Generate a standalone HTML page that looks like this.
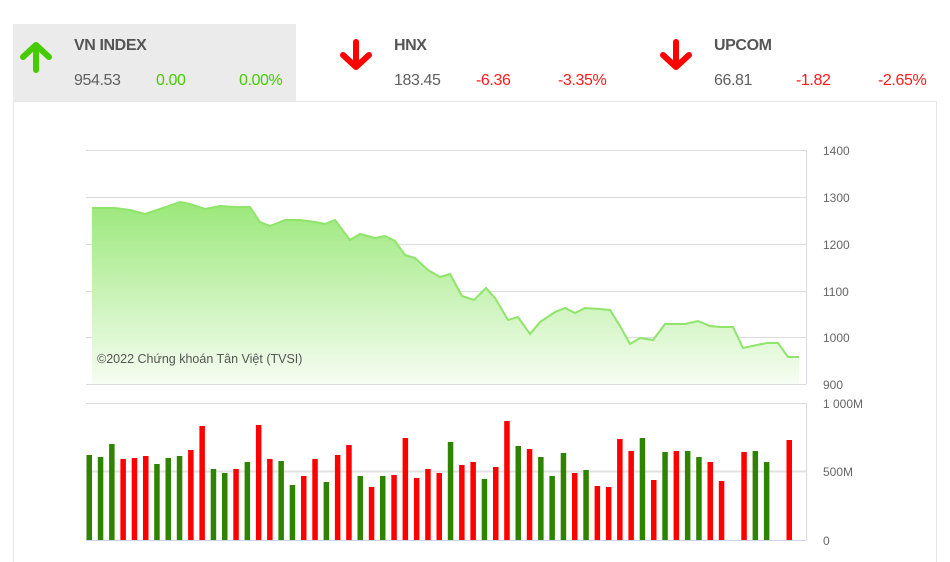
<!DOCTYPE html>
<html><head><meta charset="utf-8"><style>
body{margin:0;width:950px;height:552px;background:#fff;overflow:hidden;position:relative;font-family:"Liberation Sans",sans-serif}
.t{position:absolute;font-size:16px;color:#606060;white-space:nowrap;letter-spacing:-0.4px}
.b{font-weight:bold;color:#555;font-size:16px}
.g{color:#44cc00}.r{color:#ff1a1a}
</style></head><body>
<div style="position:absolute;left:13px;top:24px;width:283px;height:77px;background:#ebebeb"></div>
<div style="position:absolute;left:13px;top:101px;width:922px;height:460px;border-left:1px solid #e6e6e6;border-right:1px solid #e6e6e6;border-top:1px solid #e6e6e6"></div>

<svg style="position:absolute;left:0;top:0" width="950" height="110">
<g stroke-linecap="round" stroke-linejoin="round" fill="none">
<path d="M36 70 V46 M23 57 L36 45 L49 57" stroke="#44cc00" stroke-width="6"/>
<path d="M356 42 V66 M343 55 L356 67 L369 55" stroke="#ff0000" stroke-width="6"/>
<path d="M676 42 V66 M663 55 L676 67 L689 55" stroke="#ff0000" stroke-width="6"/>
</g></svg>

<div class="t b" style="left:74px;top:37px">VN INDEX</div>
<div class="t" style="left:74px;top:72px">954.53</div>
<div class="t g" style="left:156px;top:72px">0.00</div>
<div class="t g" style="left:239px;top:72px">0.00%</div>

<div class="t b" style="left:394px;top:37px">HNX</div>
<div class="t" style="left:394px;top:72px">183.45</div>
<div class="t r" style="left:476px;top:72px">-6.36</div>
<div class="t r" style="left:558px;top:72px">-3.35%</div>

<div class="t b" style="left:714px;top:37px">UPCOM</div>
<div class="t" style="left:714px;top:72px">66.81</div>
<div class="t r" style="left:796px;top:72px">-1.82</div>
<div class="t r" style="left:878px;top:72px">-2.65%</div>

<svg style="position:absolute;left:0;top:0" width="950" height="552">
<defs><linearGradient id="ag" x1="0" y1="0" x2="0" y2="1">
<stop offset="0" stop-color="#9be87a"/><stop offset="1" stop-color="#f6fdf2"/></linearGradient></defs>
<g stroke="#dcdcdc" stroke-width="1">
<line x1="86" y1="150.5" x2="806" y2="150.5"/>
<line x1="86" y1="197.5" x2="806" y2="197.5"/>
<line x1="86" y1="244.5" x2="806" y2="244.5"/>
<line x1="86" y1="291.5" x2="806" y2="291.5"/>
<line x1="86" y1="337.5" x2="806" y2="337.5"/>
<line x1="86" y1="384.5" x2="806" y2="384.5"/>
<line x1="806.5" y1="150" x2="806.5" y2="384" stroke="#d4dbe6"/>
<line x1="86" y1="403.5" x2="806" y2="403.5"/>
<line x1="86" y1="471.5" x2="806" y2="471.5" stroke="#e2e2e2" stroke-width="2"/>
<line x1="806.5" y1="403" x2="806.5" y2="540" stroke="#d4dbe6"/>
</g>
<path d="M92 208 L115 208 L130 210 L145 214 L160 209 L180 202 L190 204 L205 209 L220 206 L235 207 L250 207 L260 222 L270 226 L285 220 L300 220 L315 222 L325 224 L335 220 L350 240 L360 234 L375 238 L385 236 L395 241 L405 255 L415 258 L428 270 L440 277 L450 274 L462 296 L474 300 L486 288 L495 298 L508 320 L518 317 L530 334 L540 322 L555 312 L565 308 L575 313 L585 308 L600 309 L610 310 L620 326 L630 344 L640 338 L653 340 L665 324 L685 324 L698 321 L710 326 L720 327 L733 327 L743 348 L757 345 L767 343 L778 343 L788 357 L799 357 L799 384 L92 384 Z" fill="url(#ag)"/>
<path d="M92 208 L115 208 L130 210 L145 214 L160 209 L180 202 L190 204 L205 209 L220 206 L235 207 L250 207 L260 222 L270 226 L285 220 L300 220 L315 222 L325 224 L335 220 L350 240 L360 234 L375 238 L385 236 L395 241 L405 255 L415 258 L428 270 L440 277 L450 274 L462 296 L474 300 L486 288 L495 298 L508 320 L518 317 L530 334 L540 322 L555 312 L565 308 L575 313 L585 308 L600 309 L610 310 L620 326 L630 344 L640 338 L653 340 L665 324 L685 324 L698 321 L710 326 L720 327 L733 327 L743 348 L757 345 L767 343 L778 343 L788 357 L799 357" fill="none" stroke="#8ee56a" stroke-width="2"/>
<g font-size="12" fill="#666" font-family="Liberation Sans,sans-serif">
<text x="823" y="155">1400</text><text x="823" y="202">1300</text><text x="823" y="249">1200</text>
<text x="823" y="296">1100</text><text x="823" y="342">1000</text><text x="823" y="389">900</text>
<text x="823" y="408">1 000M</text><text x="823" y="476">500M</text><text x="823" y="545">0</text>
<text x="97" y="363" font-size="12.5" fill="#555">©2022 Chứng khoán Tân Việt (TVSI)</text>
</g>
<g id="bars"></g>
<line x1="86" y1="540.5" x2="806" y2="540.5" stroke="#ccd6eb"/>
</svg>
<script>
var d="G455 G457 G444 R459 R458 R456 G464 G458 G456 R450 R426 G469 G473 R469 G462 R425 R459 G461 G485 R476 R459 G482 R455 R445 G476 R487 G476 R475 R438 R478 R469 R473 G442 R465 R462 G479 R467 R421 G446 R449 G457 G476 G453 R473 G470 R486 R487 R439 R451 G438 R480 G452 R451 G451 G457 R462 R481 N0 R452 G451 G462 N0 R440".split(" ");
var s="",st=700/62;
d.forEach(function(v,i){var c=v[0];if(c=="N")return;var y=+v.slice(1);var x=89+st*i-2.5;
s+='<rect x="'+x.toFixed(1)+'" y="'+y+'" width="5.5" height="'+(540-y)+'" fill="'+(c=="G"?"#2e8400":"#ff0000")+'"/>';});
document.getElementById("bars").innerHTML=s;
</script>
</body></html>
